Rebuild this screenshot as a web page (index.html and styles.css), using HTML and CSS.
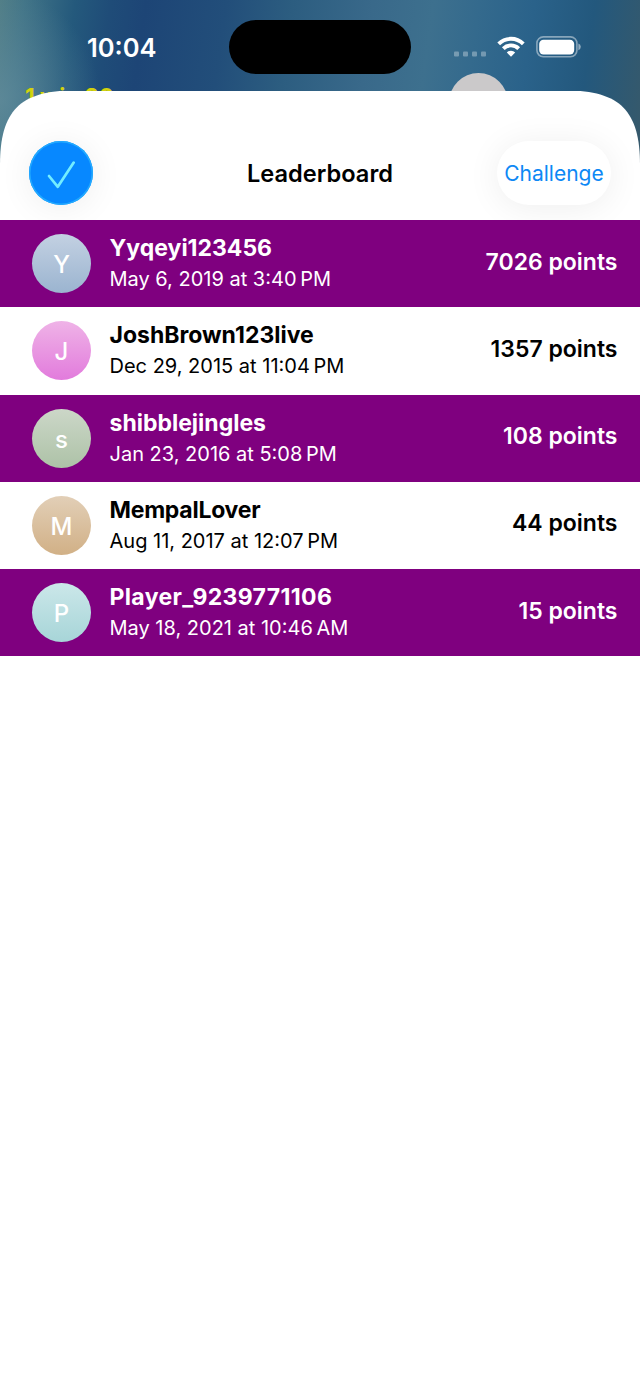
FILE: index.html
```
<!DOCTYPE html>
<html lang="en">
<head>
    <meta charset="UTF-8">
    <meta name="viewport" content="width=device-width, initial-scale=1.0">
    <title>Leaderboard</title>
    <link rel="stylesheet" href="styles.css">
</head>
<body>
    <div class="screen">
        <!-- Status bar -->
        <header class="status-bar">
            <div class="time">10:04</div>
            <div class="island"></div>
            <div class="status-icons">
                <svg class="signal" width="32" height="6" viewBox="0 0 32 6">
                    <rect x="0" y="0.5" width="5" height="5" rx="1"/>
                    <rect x="9" y="0.5" width="5" height="5" rx="1"/>
                    <rect x="18" y="0.5" width="5" height="5" rx="1"/>
                    <rect x="27" y="0.5" width="5" height="5" rx="1"/>
                </svg>
                <svg class="wifi" width="28" height="21" viewBox="0 0 28 21">
                    <path d="M1.7 7.9A17.4 17.4 0 0 1 26.3 7.9" />
                    <path d="M6.3 12.6A10.9 10.9 0 0 1 21.7 12.6" />
                    <path class="dot" d="M14 20.8L9.8 16.5A6 6 0 0 1 18.2 16.5Z" />
                </svg>
                <svg class="battery" width="46" height="22" viewBox="0 0 46 22">
                    <rect class="case" x="0.9" y="0.9" width="40" height="19.8" rx="6.4"/>
                    <rect x="3.2" y="3.8" width="35" height="14.6" rx="4.3"/>
                    <path class="cap" d="M42.4 7.4Q44.8 8.4 44.8 10.8T42.4 14.2Z"/>
                </svg>
            </div>
        </header>

        <!-- Game behind the sheet -->
        <div class="wins">1 win 20</div>
        <div class="bubble"></div>

        <main class="sheet">
            <nav class="toolbar">
                <button class="done" aria-label="Done">
                    <svg width="64" height="64" viewBox="0 0 64 64">
                        <path d="M20 35L28.8 45.8L44.7 21.6"/>
                    </svg>
                </button>
                <h1>Leaderboard</h1>
                <button class="challenge">Challenge</button>
            </nav>

            <ul class="players">
                <li class="player">
                    <div class="avatar blue">Y</div>
                    <div class="info">
                        <div class="name">Yyqeyi123456</div>
                        <div class="date">May 6, 2019 at 3:40&#8239;PM</div>
                    </div>
                    <div class="points">7026 points</div>
                </li>
                <li class="player">
                    <div class="avatar pink">J</div>
                    <div class="info">
                        <div class="name">JoshBrown123live</div>
                        <div class="date">Dec 29, 2015 at 11:04&#8239;PM</div>
                    </div>
                    <div class="points">1357 points</div>
                </li>
                <li class="player">
                    <div class="avatar green">s</div>
                    <div class="info">
                        <div class="name">shibblejingles</div>
                        <div class="date">Jan 23, 2016 at 5:08&#8239;PM</div>
                    </div>
                    <div class="points">108 points</div>
                </li>
                <li class="player">
                    <div class="avatar tan">M</div>
                    <div class="info">
                        <div class="name tight">MempalLover</div>
                        <div class="date">Aug 11, 2017 at 12:07&#8239;PM</div>
                    </div>
                    <div class="points">44 points</div>
                </li>
                <li class="player">
                    <div class="avatar teal">P</div>
                    <div class="info">
                        <div class="name wide">Player_9239771106</div>
                        <div class="date">May 18, 2021 at 10:46&#8239;AM</div>
                    </div>
                    <div class="points">15 points</div>
                </li>
            </ul>
        </main>
    </div>
</body>
</html>
```
FILE: styles.css
```
* {
    box-sizing: border-box;
}
body {
    margin: 0;
    font-family: Inter, "Liberation Sans", sans-serif;
}
.screen {
    position: relative;
    width: 640px;
    height: 1391px;
    padding-top: 91px;
    overflow: hidden;
    background:
        radial-gradient(ellipse 100px 110px at 0 100px, rgba(100, 142, 158, 0.7), rgba(60, 120, 145, 0)),
        linear-gradient(98deg, #517e86 0, #417487 25px, #24597c 75px, #1f4c78 110px, #1d4576 145px, #224e7a 225px, #2c5d80 290px, #39698a 370px, #3d708e 430px, #346a8d 475px, #2a628a 530px, #23587d 590px, #35596c 650px);
    background-size: 100% 170px;
    background-repeat: no-repeat;
}

/* Status bar */
.status-bar {
    position: absolute;
    top: 0;
    left: 0;
    width: 100%;
    height: 91px;
    color: #fff;
}
.time {
    position: absolute;
    left: 87px;
    top: 32px;
    font-size: 25.5px;
    font-weight: 600;
    line-height: 32px;
}
.island {
    position: absolute;
    left: 229px;
    top: 20px;
    width: 182px;
    height: 54px;
    border-radius: 27px;
    background: #000;
}
.status-icons {
    position: absolute;
    left: 454px;
    top: 36px;
    display: flex;
    align-items: flex-start;
    fill: #fff;
}
.signal {
    margin: 15px 10.5px 0 0;
    opacity: 0.32;
}
.wifi {
    margin-right: 11px;
    fill: none;
    stroke: #fff;
    stroke-width: 3.9;
}
.wifi .dot {
    fill: #fff;
    stroke: none;
}
.battery .case {
    fill: none;
    stroke: rgba(255, 255, 255, 0.45);
    stroke-width: 1.6;
}
.battery .cap {
    fill: rgba(255, 255, 255, 0.5);
}

.wins {
    position: absolute;
    left: 25px;
    top: 83px;
    color: #d3d20c;
    font-size: 22.5px;
    font-weight: 700;
    line-height: 28px;
}
.bubble {
    position: absolute;
    left: 449px;
    top: 73px;
    width: 59px;
    height: 59px;
    border-radius: 50%;
    background: #cbc9ca;
}

/* Sheet */
.sheet {
    height: 1300px;
    background: #fff;
    clip-path: path("M0 74C0 20 20 -0.5 74 -0.5H566C620 -0.5 640 20 640 74V1300H0Z");
}
.toolbar {
    display: flex;
    align-items: center;
    justify-content: space-between;
    height: 129px;
    padding: 35px 29px 0;
}
.toolbar button {
    height: 64px;
    padding: 0;
    border: 0;
    font-family: inherit;
}
.done {
    width: 64px;
    margin-right: 50px;
    border-radius: 50%;
    background: #0788ff;
    box-shadow: inset 0 0 0 1.5px #22aaff, 0 3px 34px rgba(0, 0, 0, 0.07);
}
.done svg {
    display: block;
    fill: none;
    stroke: #73edff;
    stroke-width: 2.7;
    stroke-linecap: round;
    stroke-linejoin: round;
}
.toolbar h1 {
    margin: 0;
    padding-top: 2px;
    font-size: 23.6px;
    font-weight: 600;
    line-height: 30px;
}
.challenge {
    width: 114px;
    border-radius: 32px;
    background: #fff;
    box-shadow: 0 3px 34px rgba(0, 0, 0, 0.07);
    color: #0d88f5;
    font-size: 21px;
}

/* Players */
.players {
    position: relative;
    margin: 0;
    padding: 0;
    list-style: none;
}
.player {
    display: flex;
    align-items: center;
    height: 87.25px;
    padding: 0 22.5px 0 32px;
    background: #fff;
    color: #000;
}
.player:nth-child(odd) {
    background: #7f007f;
    color: #fff;
}
.avatar {
    width: 59px;
    height: 59px;
    margin-right: 18.5px;
    padding-top: 1px;
    border-radius: 50%;
    color: #fff;
    font-size: 24px;
    font-weight: 500;
    line-height: 60px;
    text-align: center;
}
.blue {
    background: linear-gradient(#c3d1e2, #9bb4d0);
}
.pink {
    background: linear-gradient(#efb3e7, #e27bdc);
}
.green {
    background: linear-gradient(#ccd7c8, #adc2a7);
}
.tan {
    background: linear-gradient(#e2cfb7, #d1b086);
}
.teal {
    background: linear-gradient(#cbe7e9, #a7d5d8);
}
.info {
    flex: 1;
    white-space: nowrap;
}
.name {
    font-size: 23px;
    font-weight: 700;
    line-height: 32px;
}
.name.tight {
    letter-spacing: -0.25px;
}
.name.wide {
    letter-spacing: 0.35px;
}
.date {
    font-size: 20px;
    line-height: 31px;
}
.points {
    padding-bottom: 4px;
    font-size: 23px;
    font-weight: 600;
    line-height: 30px;
}
```
